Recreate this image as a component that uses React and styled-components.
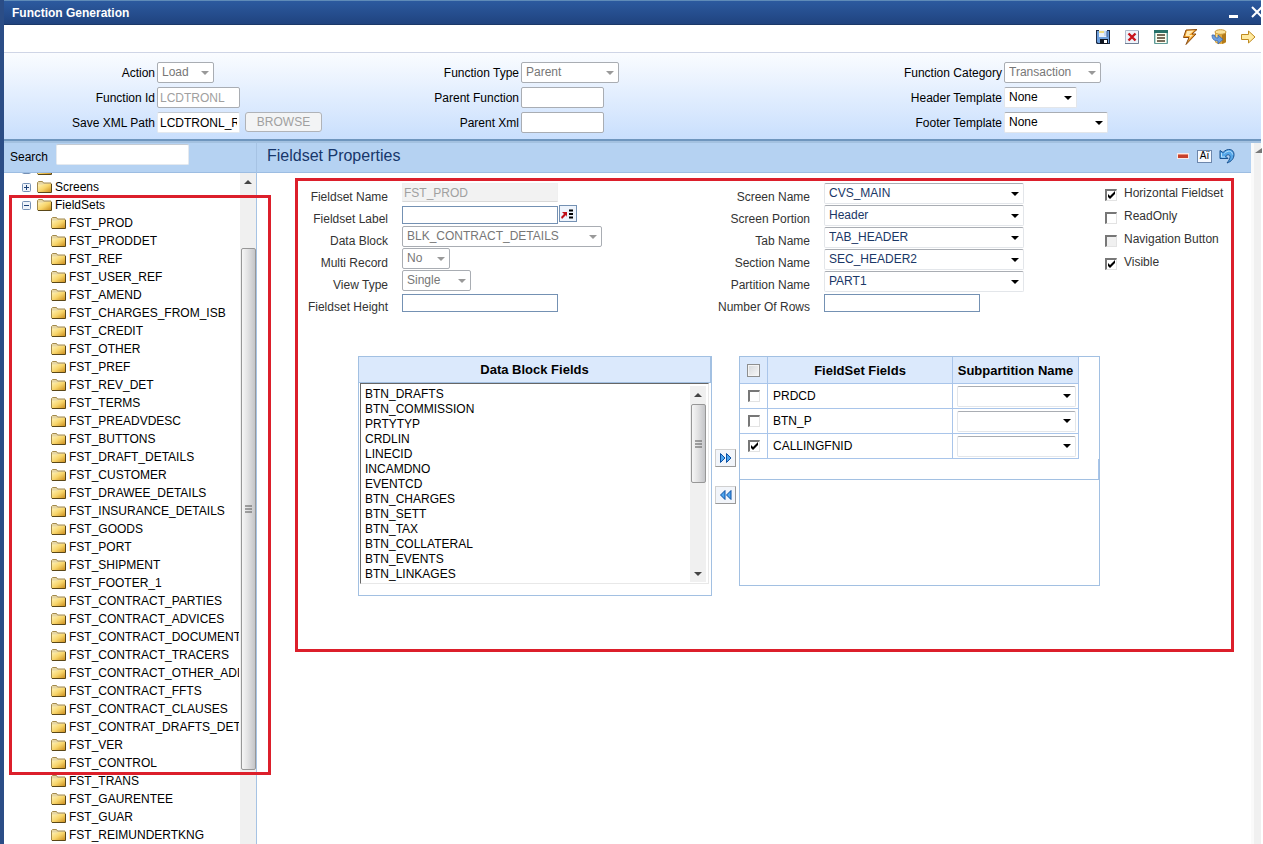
import React from 'react'
import styled, { createGlobalStyle, css } from 'styled-components'

const treeItems = [
  'FST_PROD', 'FST_PRODDET', 'FST_REF', 'FST_USER_REF', 'FST_AMEND', 'FST_CHARGES_FROM_ISB',
  'FST_CREDIT', 'FST_OTHER', 'FST_PREF', 'FST_REV_DET', 'FST_TERMS', 'FST_PREADVDESC',
  'FST_BUTTONS', 'FST_DRAFT_DETAILS', 'FST_CUSTOMER', 'FST_DRAWEE_DETAILS',
  'FST_INSURANCE_DETAILS', 'FST_GOODS', 'FST_PORT', 'FST_SHIPMENT', 'FST_FOOTER_1',
  'FST_CONTRACT_PARTIES', 'FST_CONTRACT_ADVICES', 'FST_CONTRACT_DOCUMENTS',
  'FST_CONTRACT_TRACERS', 'FST_CONTRACT_OTHER_ADDRESS', 'FST_CONTRACT_FFTS',
  'FST_CONTRACT_CLAUSES', 'FST_CONTRAT_DRAFTS_DETAILS', 'FST_VER', 'FST_CONTROL',
  'FST_TRANS', 'FST_GAURENTEE', 'FST_GUAR', 'FST_REIMUNDERTKNG'
]

const blockFields = [
  'BTN_DRAFTS', 'BTN_COMMISSION', 'PRTYTYP', 'CRDLIN', 'LINECID', 'INCAMDNO', 'EVENTCD',
  'BTN_CHARGES', 'BTN_SETT', 'BTN_TAX', 'BTN_COLLATERAL', 'BTN_EVENTS', 'BTN_LINKAGES'
]

const fieldsetFields = [
  { name: 'PRDCD', checked: false },
  { name: 'BTN_P', checked: false },
  { name: 'CALLINGFNID', checked: true }
]

const arrow = color => `url("data:image/svg+xml,%3Csvg xmlns='http://www.w3.org/2000/svg' width='8' height='4'%3E%3Cpath d='M0 0h8L4 4z' fill='%23${color}'/%3E%3C/svg%3E")`
const tick = `url("data:image/svg+xml,%3Csvg xmlns='http://www.w3.org/2000/svg' width='9' height='9'%3E%3Cpath d='M1 3v3l2 2 5-5V0L3 5z' fill='%23000'/%3E%3C/svg%3E")`

/* icons */

const SaveIcon = () => (
  <svg width="16" height="16" viewBox="0 0 16 16">
    <path d="M1 1h14v14H2l-1-1z" fill="#1c2b45" />
    <path d="M2 2h12v12H3l-1-1z" fill="#6d9fdc" />
    <path d="M4 1h8v7H4z" fill="#e9f1fb" />
    <path d="M4 2h5v2H4z" fill="#eedb82" />
    <path d="M9 2h3v5H9z" fill="#c4d8f2" />
    <path d="M5 10h8v5H5z" fill="#10151f" />
    <path d="M9 11h3v3H9z" fill="#fff" />
    <path d="M12 2v6" stroke="#3a5f96" />
  </svg>
)

const DeleteIcon = () => (
  <svg width="16" height="16" viewBox="0 0 16 16">
    <path d="M1.500 1.500h13v13h-13z" fill="#eef3fa" stroke="#b0bccd" />
    <path d="M1 14.500h13.500V2" fill="none" stroke="#707f95" />
    <path d="M4.500 4.500l7 7M11.500 4.500l-7 7" stroke="#c8141c" strokeWidth="2.400" />
  </svg>
)

const ListIcon = () => (
  <svg width="16" height="16" viewBox="0 0 16 16">
    <path d="M1.500 1.500h13v13h-13z" fill="#fffef0" stroke="#5f9a96" />
    <path d="M1 1h14v3H1z" fill="#277069" />
    <path d="M2.500 4v10M13.500 4v10" stroke="#b7d8d4" />
    <path d="M4 6h8M4 9h8M4 12h8" stroke="#4b3d28" strokeWidth="1.400" />
  </svg>
)

const BoltIcon = () => (
  <svg width="16" height="16" viewBox="0 0 16 16">
    <path d="M4 1l11-.5-5 4.500h4L4 15.500 7 8.500H1.500z" fill="#f0a02c" stroke="#8a4c10" strokeLinejoin="round" />
    <path d="M5 2l7-.4-5 4.500h4l-4 4 1-3H3.500z" fill="#ffeab4" />
  </svg>
)

const DatabaseIcon = () => (
  <svg width="16" height="16" viewBox="0 0 16 16">
    <path d="M4 3v10c1 2.500 10 2.500 11 0V3z" fill="#e0a83a" />
    <path d="M11 4h4v9l-4 2z" fill="#b47a19" />
    <path d="M6 5v8" stroke="#f8dc8c" strokeWidth="2" />
    <ellipse cx="9.500" cy="3" rx="5.500" ry="2.300" fill="#fbe29a" stroke="#c99634" />
    <path d="M1 6c0 4 2 6 6 6v3l5-4.500L7 6v3C4.500 9 4 8 3.500 6z" fill="#6c9fe0" stroke="#3c66a8" strokeWidth=".8" />
  </svg>
)

const NextIcon = () => (
  <svg width="16" height="16" viewBox="0 0 16 16">
    <path d="M1.500 5.500h7V2L15 8l-6.500 6v-3.500h-7z" fill="#ffeaa0" stroke="#bf8a1e" strokeLinejoin="round" />
  </svg>
)

const MinusIcon = () => (
  <svg width="14" height="16" viewBox="0 0 14 16">
    <path d="M1 5h12v6H1z" fill="#f7e9e7" />
    <path d="M2 6h10v4H2z" fill="#c7402b" />
    <path d="M2 6h10v1H2z" fill="#e98a73" />
  </svg>
)

const UndoIcon = () => (
  <svg width="16" height="16" viewBox="0 0 16 16">
    <path d="M1 2.500v8h8L6.500 8C9 6 11.500 6.500 11 9.500c-.3 2-1.500 3.500-3 5.500 4.500-1.500 7-4.500 7-8.500C15 1 8.500-.5 4 4.500z" fill="#56a8ea" stroke="#17508f" strokeLinejoin="round" />
    <path d="M2.500 5v4H6M5.500 5.500C8.500 2 13 2.500 13.500 6.500" fill="none" stroke="#b9e0fb" />
  </svg>
)

const LovIcon = () => (
  <svg width="14" height="12" viewBox="0 0 14 12">
    <path d="M0 9l3-3-2-2h5v5L5 7 1 11z" fill="#c00d16" />
    <path d="M8 2.500h4M8 6h4M8 9.500h4" stroke="#000" strokeWidth="2" />
  </svg>
)

const MoveIcon = ({ back }) => (
  <svg width="14" height="12" viewBox="0 0 14 12">
    <path d={back ? 'M6 1.500v9L1.500 6zM12 1.500v9L7.500 6z' : 'M1.500 1.500v9L6 6zM7.500 1.500v9L12 6z'} fill="#4fa6ef" stroke="#0b4fa3" strokeLinejoin="round" />
  </svg>
)

const FolderIcon = () => (
  <svg width="15" height="14" viewBox="0 0 15 14">
    <defs>
      <linearGradient id="folderFill" x1="0" y1="0" x2="1" y2="1">
        <stop offset="0" stopColor="#fff3b8" />
        <stop offset=".5" stopColor="#f7d469" />
        <stop offset="1" stopColor="#c98a1b" />
      </linearGradient>
    </defs>
    <path d="M.5 12V2.500l1-1h4l1 1.500h7.500v9z" fill="#e6d6a4" stroke="#a38a4c" />
    <path d="M1 4.500h5l1-.5h7v8.500H1z" fill="url(#folderFill)" />
    <path d="M1 12.500h13.500V4" fill="none" stroke="#5a4718" />
  </svg>
)

const ExpandIcon = ({ open }) => (
  <svg width="9" height="9" viewBox="0 0 9 9">
    <rect x=".5" y=".5" width="8" height="8" rx="1" fill="#eef3fa" stroke="#7590b4" />
    <path d={open ? 'M2 4.500h5' : 'M2 4.500h5M4.500 2v5'} stroke="#1d4177" />
  </svg>
)

/* shared controls */

const Select = ({ value, ...rest }) => (
  <SelectBox defaultValue={value} {...rest}>
    <option>{value}</option>
  </SelectBox>
)

const ScrollBar = ({ top, bottom, thumb }) => (
  <ScrollTrack>
    <svg width="8" height="18" viewBox="0 0 8 18"><path d="M0 11h8L4 7z" fill="#444" /></svg>
    <ScrollThumb $top={top} $bottom={bottom} $size={thumb}>
      <svg width="7" height="8" viewBox="0 0 7 8"><path d="M0 1h7M0 4h7M0 7h7" stroke="#555" /></svg>
    </ScrollThumb>
    {thumb && <svg width="8" height="18" viewBox="0 0 8 18"><path d="M0 8h8l-4 4z" fill="#444" /></svg>}
  </ScrollTrack>
)

const HeaderField = ({ id, label, children }) => (
  <HeaderRow>
    <label htmlFor={id}>{label}</label>
    {children}
  </HeaderRow>
)

const Field = ({ id, label, labelWidth, children }) => (
  <FieldRow>
    <FieldLabel htmlFor={id} $width={labelWidth}>{label}</FieldLabel>
    {children}
  </FieldRow>
)

const Flag = ({ id, label, ...rest }) => (
  <FlagRow>
    <CheckBox id={id} {...rest} />
    <label htmlFor={id}>{label}</label>
  </FlagRow>
)

const Header = () => (
  <HeaderForm>
    <div>
      <HeaderField id="action" label="Action"><Select id="action" value="Load" $width={57} disabled /></HeaderField>
      <HeaderField id="functionId" label="Function Id"><TextInput id="functionId" defaultValue="LCDTRONL" $width={83} $height={21} disabled /></HeaderField>
      <HeaderField id="savePath" label="Save XML Path">
        <TextInput id="savePath" defaultValue="LCDTRONL_RAD.xml" $width={83} $height={21} $plain />
        <BrowseButton disabled>BROWSE</BrowseButton>
      </HeaderField>
    </div>
    <div>
      <HeaderField id="functionType" label="Function Type"><Select id="functionType" value="Parent" $width={98} disabled /></HeaderField>
      <HeaderField id="parentFunction" label="Parent Function"><TextInput id="parentFunction" $width={83} $height={21} disabled /></HeaderField>
      <HeaderField id="parentXml" label="Parent Xml"><TextInput id="parentXml" $width={83} $height={21} disabled /></HeaderField>
    </div>
    <div>
      <HeaderField id="category" label="Function Category"><Select id="category" value="Transaction" $width={97} disabled /></HeaderField>
      <HeaderField id="headerTpl" label="Header Template"><Select id="headerTpl" value="None" $width={73} /></HeaderField>
      <HeaderField id="footerTpl" label="Footer Template"><Select id="footerTpl" value="None" $width={104} /></HeaderField>
    </div>
  </HeaderForm>
)

const Sidebar = () => (
  <SidebarWrap>
    <SearchBar>
      <label htmlFor="search">Search</label>
      <TextInput id="search" $width={133} $height={21} $plain />
    </SearchBar>
    <TreeArea>
      <Tree>
        <TreeRow><ExpandIcon /><FolderIcon /></TreeRow>
        <TreeRow><ExpandIcon /><FolderIcon /><span>Screens</span></TreeRow>
        <TreeRow><ExpandIcon open /><FolderIcon /><span>FieldSets</span></TreeRow>
        {treeItems.map(item => (
          <TreeRow key={item} $child><FolderIcon /><span>{item}</span></TreeRow>
        ))}
      </Tree>
      <ScrollBar top={57} bottom={74} />
    </TreeArea>
    <TreeHighlight />
  </SidebarWrap>
)

const Properties = () => (
  <PropertiesBox>
    <FieldGrid>
      <div>
        <Field id="fsName" label="Fieldset Name" labelWidth={90}><TextInput id="fsName" defaultValue="FST_PROD" $width={156} $height={19} $readonly readOnly /></Field>
        <Field id="fsLabel" label="Fieldset Label" labelWidth={90}>
          <TextInput id="fsLabel" $width={156} $height={18} $low />
          <LovButton aria-label="Pick label"><LovIcon /></LovButton>
        </Field>
        <Field id="dataBlock" label="Data Block" labelWidth={90}><Select id="dataBlock" value="BLK_CONTRACT_DETAILS" $width={200} disabled /></Field>
        <Field id="multiRecord" label="Multi Record" labelWidth={90}><Select id="multiRecord" value="No" $width={48} disabled /></Field>
        <Field id="viewType" label="View Type" labelWidth={90}><Select id="viewType" value="Single" $width={69} disabled /></Field>
        <Field id="fsHeight" label="Fieldset Height" labelWidth={90}><TextInput id="fsHeight" $width={156} $height={18} $low /></Field>
      </div>
      <div>
        <Field id="screenName" label="Screen Name" labelWidth={112}><Select id="screenName" value="CVS_MAIN" $width={200} $blue /></Field>
        <Field id="screenPortion" label="Screen Portion" labelWidth={112}><Select id="screenPortion" value="Header" $width={200} $blue /></Field>
        <Field id="tabName" label="Tab Name" labelWidth={112}><Select id="tabName" value="TAB_HEADER" $width={200} $blue /></Field>
        <Field id="sectionName" label="Section Name" labelWidth={112}><Select id="sectionName" value="SEC_HEADER2" $width={200} $blue /></Field>
        <Field id="partitionName" label="Partition Name" labelWidth={112}><Select id="partitionName" value="PART1" $width={200} $blue /></Field>
        <Field id="rows" label="Number Of Rows" labelWidth={112}><TextInput id="rows" $width={156} $height={18} $low /></Field>
      </div>
      <div>
        <Flag id="horizontal" label="Horizontal Fieldset" defaultChecked />
        <Flag id="readOnly" label="ReadOnly" />
        <Flag id="navButton" label="Navigation Button" disabled />
        <Flag id="visible" label="Visible" defaultChecked />
      </div>
    </FieldGrid>
    <Panels>
      <BlockPanel>
        <PanelTitle id="blockTitle">Data Block Fields</PanelTitle>
        <ListFrame>
          <ListBox multiple size={13} aria-labelledby="blockTitle">
            {blockFields.map(field => <option key={field}>{field}</option>)}
          </ListBox>
          <ScrollBar top={0} thumb={79} />
        </ListFrame>
      </BlockPanel>
      <MoveButtons>
        <MoveButton aria-label="Add fields"><MoveIcon /></MoveButton>
        <MoveButton aria-label="Remove fields"><MoveIcon back /></MoveButton>
      </MoveButtons>
      <FieldsPanel>
        <TableArea>
          <FieldsTable>
            <thead>
              <tr>
                <th><CheckBox $grey aria-label="Select all" /></th>
                <th>FieldSet Fields</th>
                <th>Subpartition Name</th>
              </tr>
            </thead>
            <tbody>
              {fieldsetFields.map(({ name, checked }) => (
                <tr key={name}>
                  <td><CheckBox defaultChecked={checked} aria-label={name} /></td>
                  <td>{name}</td>
                  <td><Select value="" $width={119} aria-label={`${name} subpartition`} /></td>
                </tr>
              ))}
            </tbody>
          </FieldsTable>
          <TableFoot />
        </TableArea>
      </FieldsPanel>
    </Panels>
  </PropertiesBox>
)

const App = () => {
  return (
    <>
      <GlobalStyle />
      <AppWrap>
        <TitleBar>
          <h1>Function Generation</h1>
          <button aria-label="Minimize"><svg width="10" height="14" viewBox="0 0 10 14"><path d="M0 9h9v3H0z" fill="#fff" /></svg></button>
          <button aria-label="Close"><svg width="10" height="14" viewBox="0 0 10 14"><path d="M1 1l10 10M11 1L1 11" stroke="#fff" strokeWidth="2" /></svg></button>
        </TitleBar>
        <Toolbar>
          <button aria-label="Save"><SaveIcon /></button>
          <button aria-label="Delete"><DeleteIcon /></button>
          <button aria-label="Details"><ListIcon /></button>
          <button aria-label="Generate"><BoltIcon /></button>
          <button aria-label="Deploy"><DatabaseIcon /></button>
          <button aria-label="Next"><NextIcon /></button>
        </Toolbar>
        <Header />
        <Body>
          <Sidebar />
          <Main>
            <MainBar>
              <h2>Fieldset Properties</h2>
              <button aria-label="Remove"><MinusIcon /></button>
              <TextButton aria-label="Rename">Aï</TextButton>
              <button aria-label="Undo"><UndoIcon /></button>
            </MainBar>
            <Properties />
          </Main>
          <PageScroll>
            <svg width="8" height="14" viewBox="0 0 8 14"><path d="M1 10h7V5z" fill="#777" /></svg>
          </PageScroll>
        </Body>
      </AppWrap>
    </>
  )
}

const GlobalStyle = createGlobalStyle`
  * {
    box-sizing: border-box;
  }
  body {
    margin: 0;
    background: #fff;
    overflow: hidden;
  }
  body, button, input, select {
    font-family: "Liberation Sans", Arial, sans-serif;
    font-size: 12px;
    color: #000;
  }
  h1, h2, ul {
    margin: 0;
    padding: 0;
  }
  button {
    padding: 0;
    border: 0;
    background: none;
  }
  svg {
    display: block;
    flex: none;
  }
`

const AppWrap = styled.div`
  display: flex;
  flex-direction: column;
  height: 100vh;
  margin-right: 2px;
  border-left: 4px solid #2b4d86;
`

const TitleBar = styled.header`
  display: flex;
  align-items: center;
  gap: 12px;
  height: 25px;
  padding-left: 8px;
  overflow: hidden;
  border-top: 1px solid #5f8bb8;
  border-bottom: 1px solid #1b3868;
  background: linear-gradient(#2c5a9f, #20437f);
  h1 {
    flex: 1;
    font-size: 12px;
    color: #fff;
  }
`

const Toolbar = styled.div`
  display: flex;
  align-items: center;
  justify-content: flex-end;
  gap: 13px;
  height: 28px;
  padding: 0 5px 3px 0;
  border-bottom: 1px solid #cfd5e6;
`

const HeaderForm = styled.form`
  display: grid;
  grid-template-columns: 364fr 483fr 410fr;
  height: 88px;
  padding-top: 9px;
  border-bottom: 2px solid #6f96be;
  background: linear-gradient(#fafcff, #c9dffd);
`

const HeaderRow = styled.div`
  display: flex;
  align-items: center;
  height: 21px;
  margin-bottom: 4px;
  label {
    width: 151px;
    margin-right: 2px;
    text-align: right;
    white-space: nowrap;
  }
`

const SelectBox = styled.select`
  appearance: none;
  flex: none;
  width: ${p => p.$width}px;
  height: 21px;
  padding: 0 16px 1px 4px;
  border: 1px solid #e3e6ea;
  border-top-color: #a9adb3;
  border-radius: 2px;
  background: #fff ${arrow('000')} no-repeat right 4px center;
  color: ${p => (p.$blue ? '#1a3766' : '#000')};
  &:disabled {
    border-color: #a9adb3;
    background-image: ${arrow('999')};
    color: #777;
    opacity: 1;
  }
`

const TextInput = styled.input`
  width: ${p => p.$width}px;
  height: ${p => p.$height}px;
  padding: 0 2px;
  border: 1px solid #7491b3;
  background: #fff;
  ${p => p.$low && css`
    margin-top: 3px;
  `}
  ${p => p.$plain && css`
    border-color: #c4cbd3 #e4e9ef #e4e9ef;
    border-radius: 2px;
  `}
  ${p => p.$readonly && css`
    margin-top: 2px;
    padding: 0 1px;
    border-color: #f0f0f0 #f0f0f0 #d8d8d8;
    background: #f2f2f2;
    color: #a0a0a0;
  `}
  &:disabled {
    border-color: #a9adb3;
    border-radius: 2px;
    color: #a0a0a0;
  }
`

const BrowseButton = styled.button`
  width: 77px;
  height: 20px;
  margin: 0 0 1px 5px;
  border: 1px solid #b0b3b8;
  border-radius: 3px;
  background: #f3f4f5;
  color: #a0a0a0;
`

const CheckBox = styled.input.attrs({ type: 'checkbox' })`
  appearance: none;
  flex: none;
  width: 12px;
  height: 12px;
  margin: 0;
  border: 1px solid #e3e3e3;
  border-top: 2px solid #777;
  border-left: 2px solid #777;
  background: #fff no-repeat center;
  &:checked {
    background-image: ${tick};
  }
  &:disabled {
    background-color: #f0f0f0;
  }
  ${p => p.$grey && css`
    width: 13px;
    height: 13px;
    border: 1px solid #8e8f8f;
    background: linear-gradient(135deg, #d5d8db, #f8f8f8);
    box-shadow: inset 0 0 0 1px #f4f4f4;
  `}
`

const Body = styled.div`
  display: flex;
  flex: 1;
  min-height: 0;
  border-top: 2px solid #a3c1e0;
`

const SidebarWrap = styled.aside`
  position: relative;
  display: flex;
  flex-direction: column;
  width: 253px;
  flex: none;
  border-right: 1px solid #a6c3e4;
`

const SearchBar = styled.div`
  display: flex;
  gap: 8px;
  height: 30px;
  flex: none;
  padding: 1px 0 0 6px;
  border-bottom: 1px solid #9dbde2;
  background: #b5d2f2;
  label {
    padding-top: 6px;
  }
`

const TreeArea = styled.div`
  display: flex;
  flex: 1;
  min-height: 0;
`

const Tree = styled.ul`
  flex: 1;
  min-width: 0;
  margin-right: 1px;
  overflow: hidden;
  list-style: none;
  /* the first row is scrolled out of view */
  li:first-child {
    margin-top: -13px;
  }
`

const TreeRow = styled.li`
  display: flex;
  align-items: center;
  gap: ${p => (p.$child ? 3 : 6)}px;
  height: 18px;
  padding-left: ${p => (p.$child ? 47 : 18)}px;
  white-space: nowrap;
  svg + span {
    margin-left: ${p => (p.$child ? 0 : -3)}px;
  }
`

const ScrollTrack = styled.div`
  display: flex;
  flex-direction: column;
  align-items: center;
  width: 16px;
  flex: none;
  background: #f0f0f0;
`

const ScrollThumb = styled.div`
  display: flex;
  align-items: center;
  justify-content: center;
  width: 15px;
  flex: 1;
  margin: ${p => p.$top}px 0 ${p => p.$bottom || 0}px;
  border: 1px solid #979797;
  border-radius: 2px;
  background: linear-gradient(90deg, #f6f6f6, #e2e2e3 45%, #c4c5c8);
  ${p => p.$size && css`
    flex: none;
    height: ${p.$size}px;
    margin-bottom: auto;
  `}
`

/* marks the fieldset part of the tree, drawn over it */
const TreeHighlight = styled.div`
  position: absolute;
  top: 52px;
  right: -15px;
  bottom: 69px;
  left: 5px;
  border: 3px solid #dc1f2b;
  pointer-events: none;
`

const Main = styled.main`
  flex: 1;
  min-width: 0;
`

const MainBar = styled.div`
  display: flex;
  align-items: center;
  gap: 7px;
  height: 30px;
  padding: 0 16px 3px 10px;
  border-bottom: 1px solid #9dbde2;
  background: #b5d2f2;
  h2 {
    flex: 1;
    font-size: 16px;
    font-weight: 400;
    color: #17376b;
  }
`

const TextButton = styled.button`
  width: 15px;
  height: 13px;
  border: 1px solid #6d87ac;
  background: #f7faff;
  font-size: 10px;
  line-height: 10px;
`

const PageScroll = styled.div`
  width: 10px;
  flex: none;
  border-left: 3px solid #fafafa;
  background: #f0f0f0;
`

const PropertiesBox = styled.section`
  margin: 5px 17px 0 38px;
  padding-bottom: 53px;
  border: 3px solid #dc1f2b;
`

const FieldGrid = styled.div`
  display: grid;
  grid-template-columns: 400fr 407fr 126px;
`

const FieldRow = styled.div`
  display: flex;
  align-items: flex-start;
  height: 22px;
  select {
    margin-top: 2px;
  }
  select:disabled {
    margin-top: 1px;
  }
`

const FieldLabel = styled.label`
  width: ${p => p.$width}px;
  flex: none;
  margin-right: 14px;
  padding-top: 9px;
  line-height: 14px;
  color: #333;
  text-align: right;
  white-space: nowrap;
`

const LovButton = styled.button`
  display: flex;
  align-items: center;
  justify-content: center;
  width: 18px;
  height: 17px;
  margin: 2px 0 0 1px;
  border: 1px solid #7491b3;
  background: #eef4fc;
`

const FlagRow = styled.div`
  display: flex;
  align-items: center;
  gap: 7px;
  height: 23px;
  color: #333;
  white-space: nowrap;
  input {
    margin-top: 4px;
  }
`

const Panels = styled.div`
  display: flex;
  align-items: flex-start;
  gap: 3px;
  margin-top: 43px;
  padding: 0 131px 0 60px;
`

const BlockPanel = styled.div`
  flex: 354;
  min-width: 0;
  padding-bottom: 11px;
  border: 1px solid #a2c0e2;
`

const PanelTitle = styled.div`
  height: 26px;
  border-right: 1px solid #a2c0e2;
  border-bottom: 1px solid #a2c0e2;
  background: #dbe9fc;
  font-size: 13px;
  font-weight: 700;
  line-height: 25px;
  text-align: center;
`

const ListFrame = styled.div`
  display: flex;
  margin: 0 2px 0 1px;
  padding: 2px 2px 1px 0;
  border: 1px solid #e8e8e8;
  border-top-color: #666;
  border-left-color: #666;
`

const ListBox = styled.select`
  flex: 1;
  min-width: 0;
  height: 196px;
  padding: 1px 0 0;
  border: 0;
  outline: 0;
  overflow: hidden;
  background: #fff;
  option {
    height: 15px;
    min-height: 15px;
    padding: 0 4px;
    line-height: 15px;
  }
`

const MoveButtons = styled.div`
  display: flex;
  flex-direction: column;
  gap: 19px;
  padding-top: 93px;
`

const MoveButton = styled.button`
  display: flex;
  align-items: center;
  justify-content: center;
  width: 21px;
  height: 18px;
  border: 1px solid #d0d0d0;
  border-right-color: #999;
  border-bottom-color: #999;
  background: #f2f5fa;
`

const FieldsPanel = styled.div`
  flex: 361;
  min-width: 0;
  height: 230px;
  border: 1px solid #a2c0e2;
`

const TableArea = styled.div`
  border-bottom: 1px solid #a2c0e2;
`

const TableFoot = styled.div`
  height: 20px;
  border-right: 1px solid #a9c5ea;
`

const FieldsTable = styled.table`
  border-collapse: separate;
  border-spacing: 0;
  th, td {
    height: 25px;
    padding: 0 5px;
    border-right: 1px solid #a9c5ea;
    border-bottom: 1px solid #a9c5ea;
    white-space: nowrap;
  }
  th {
    height: 27px;
    padding: 0;
    background: #dbe9fc;
    font-size: 13px;
  }
  th:nth-child(1) {
    width: 28px;
  }
  th:nth-child(2) {
    width: 185px;
  }
  th:nth-child(3) {
    width: 126px;
  }
  td:nth-child(1) {
    padding: 0;
    text-align: center;
  }
  td:nth-child(3) {
    padding: 0 2px 0 4px;
  }
  input, select {
    display: block;
    margin: 0 auto;
  }
`

export default App
